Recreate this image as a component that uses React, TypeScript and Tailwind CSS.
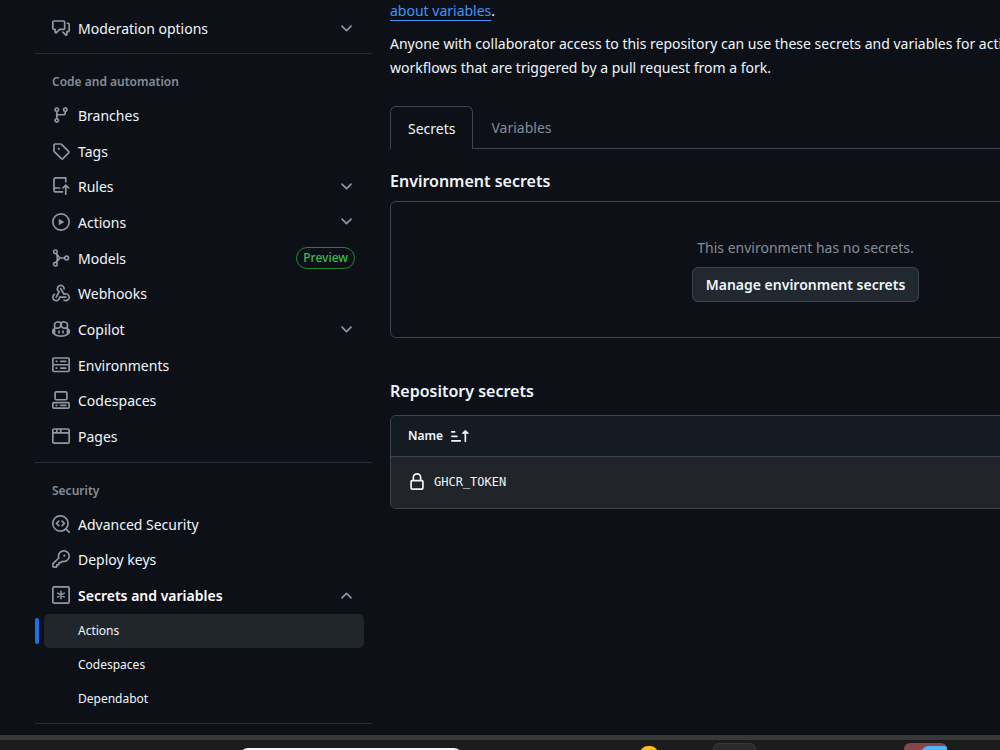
import type { ReactNode } from "react";

const ICONS = {
  discussion: [
    "M1.75 1h8.5c.966 0 1.75.784 1.75 1.75v5.5A1.75 1.75 0 0 1 10.25 10H7.061l-2.574 2.573A1.458 1.458 0 0 1 2 11.543V10h-.25A1.75 1.75 0 0 1 0 8.25v-5.5C0 1.784.784 1 1.75 1ZM1.5 2.75v5.5c0 .138.112.25.25.25h1a.75.75 0 0 1 .75.75v2.19l2.72-2.72a.749.749 0 0 1 .53-.22h3.5a.25.25 0 0 0 .25-.25v-5.5a.25.25 0 0 0-.25-.25h-8.5a.25.25 0 0 0-.25.25Zm13 2a.25.25 0 0 0-.25-.25h-.5a.75.75 0 0 1 0-1.5h.5c.966 0 1.75.784 1.75 1.75v5.5A1.75 1.75 0 0 1 14.25 12H14v1.543a1.458 1.458 0 0 1-2.487 1.03L9.22 12.28a.749.749 0 0 1 .326-1.275.749.749 0 0 1 .734.215l2.22 2.22v-2.19a.75.75 0 0 1 .75-.75h1a.25.25 0 0 0 .25-.25Z",
  ],
  branch: [
    "M9.5 3.25a2.25 2.25 0 1 1 3 2.122V6A2.5 2.5 0 0 1 10 8.5H6a1 1 0 0 0-1 1v1.128a2.251 2.251 0 1 1-1.5 0V5.372a2.25 2.25 0 1 1 1.5 0v1.836A2.493 2.493 0 0 1 6 7h4a1 1 0 0 0 1-1v-.628A2.25 2.25 0 0 1 9.5 3.25Zm-6 0a.75.75 0 1 0 1.5 0 .75.75 0 0 0-1.5 0Zm8.25-.75a.75.75 0 1 0 0 1.5.75.75 0 0 0 0-1.5ZM4.25 12a.75.75 0 1 0 0 1.5.75.75 0 0 0 0-1.5Z",
  ],
  tag: [
    "M1 7.775V2.75C1 1.784 1.784 1 2.75 1h5.025c.464 0 .91.184 1.238.513l6.25 6.25a1.75 1.75 0 0 1 0 2.474l-5.026 5.026a1.75 1.75 0 0 1-2.474 0l-6.25-6.25A1.752 1.752 0 0 1 1 7.775Zm1.5 0c0 .066.026.13.073.177l6.25 6.25a.25.25 0 0 0 .354 0l5.025-5.025a.25.25 0 0 0 0-.354l-6.25-6.25a.25.25 0 0 0-.177-.073H2.75a.25.25 0 0 0-.25.25ZM6 5a1 1 0 1 1 0 2 1 1 0 0 1 0-2Z",
  ],
  push: [
    "M1 2.5A2.5 2.5 0 0 1 3.5 0h8.75a.75.75 0 0 1 .75.75v3.5a.75.75 0 0 1-1.5 0V1.5h-8a1 1 0 0 0-1 1v6.708A2.493 2.493 0 0 1 3.5 9h3.25a.75.75 0 0 1 0 1.5H3.5a1 1 0 0 0 0 2h5.75a.75.75 0 0 1 0 1.5H3.5A2.5 2.5 0 0 1 1 11.5v-9Zm13.23 7.79h-.001l-1.224-1.224v6.184a.75.75 0 0 1-1.5 0V9.066L10.28 10.29a.75.75 0 0 1-1.06-1.061l2.505-2.504a.75.75 0 0 1 1.06 0L15.29 9.23a.751.751 0 0 1-.018 1.042.751.751 0 0 1-1.042.018Z",
  ],
  play: [
    "M8 0a8 8 0 1 1 0 16A8 8 0 0 1 8 0ZM1.5 8a6.5 6.5 0 1 0 13 0 6.5 6.5 0 0 0-13 0Zm4.879-2.773 4.264 2.559a.25.25 0 0 1 0 .428l-4.264 2.559A.25.25 0 0 1 6 10.559V5.442a.25.25 0 0 1 .379-.215Z",
  ],
  webhook: [
    "M5.5 4.25a2.25 2.25 0 0 1 4.5 0 .75.75 0 0 0 1.5 0 3.75 3.75 0 1 0-6.14 2.889l-2.272 4.258a.75.75 0 0 0 1.324.706L7 7.25a.75.75 0 0 0-.309-1.015A2.25 2.25 0 0 1 5.5 4.25Z",
    "M7.364 3.607a.75.75 0 0 1 1.03.257l2.608 4.349a3.75 3.75 0 1 1-.628 6.785.75.75 0 0 1 .752-1.299 2.25 2.25 0 1 0-.033-3.88.75.75 0 0 1-1.03-.256L7.107 4.636a.75.75 0 0 1 .257-1.03Z",
    "M2.9 8.776A.75.75 0 0 1 2.625 9.8 2.25 2.25 0 1 0 6 11.75a.75.75 0 0 1 .75-.751h5.5a.75.75 0 0 1 0 1.5H7.425a3.751 3.751 0 1 1-5.55-3.998.75.75 0 0 1 1.024.274Z",
  ],
  copilot: [
    "M7.998 15.035c-4.562 0-7.873-2.914-7.998-3.749V9.338c.085-.628.677-1.686 1.588-2.065.013-.07.024-.143.036-.218.029-.183.06-.384.126-.612-.201-.508-.254-1.084-.254-1.656 0-.87.128-1.769.693-2.484.579-.733 1.494-1.124 2.724-1.261 1.206-.134 2.262.034 2.944.765.05.053.096.108.139.165.044-.057.094-.112.143-.165.682-.731 1.738-.899 2.944-.765 1.23.137 2.145.528 2.724 1.261.566.715.693 1.614.693 2.484 0 .572-.053 1.148-.254 1.656.066.228.098.429.126.612.012.076.024.148.037.218.924.385 1.522 1.471 1.591 2.095v1.872c0 .766-3.351 3.795-8.002 3.795Zm0-1.485c2.28 0 4.584-1.11 5.002-1.433V7.862l-.023-.116c-.49.21-1.075.291-1.727.291-1.146 0-2.059-.327-2.71-.991A3.222 3.222 0 0 1 8 6.303a3.24 3.24 0 0 1-.544.743c-.65.664-1.563.991-2.71.991-.652 0-1.236-.081-1.727-.291l-.023.116v4.255c.419.323 2.722 1.433 5.002 1.433ZM6.762 2.83c-.193-.206-.637-.413-1.682-.297-1.019.113-1.479.404-1.713.7-.247.312-.369.789-.369 1.554 0 .793.129 1.171.308 1.371.162.181.519.379 1.442.379.853 0 1.339-.235 1.638-.54.315-.322.527-.827.617-1.553.117-.935-.037-1.395-.241-1.614Zm4.155-.297c-1.044-.116-1.488.091-1.681.297-.204.219-.359.679-.242 1.614.091.726.303 1.231.618 1.553.299.305.784.54 1.638.54.922 0 1.28-.198 1.442-.379.179-.2.308-.578.308-1.371 0-.765-.123-1.242-.37-1.554-.233-.296-.693-.587-1.713-.7Z",
    "M6.25 9.037a.75.75 0 0 1 .75.75v1.501a.75.75 0 0 1-1.5 0V9.787a.75.75 0 0 1 .75-.75Zm4.25.75v1.501a.75.75 0 0 1-1.5 0V9.787a.75.75 0 0 1 1.5 0Z",
  ],
  server: [
    "M1.75 1h12.5c.966 0 1.75.784 1.75 1.75v4c0 .372-.116.717-.314 1 .198.283.314.628.314 1v4a1.75 1.75 0 0 1-1.75 1.75H1.75A1.75 1.75 0 0 1 0 12.75v-4c0-.358.109-.707.314-1a1.739 1.739 0 0 1-.314-1v-4C0 1.784.784 1 1.75 1ZM1.5 2.75v4c0 .138.112.25.25.25h12.5a.25.25 0 0 0 .25-.25v-4a.25.25 0 0 0-.25-.25H1.75a.25.25 0 0 0-.25.25Zm.25 5.75a.25.25 0 0 0-.25.25v4c0 .138.112.25.25.25h12.5a.25.25 0 0 0 .25-.25v-4a.25.25 0 0 0-.25-.25ZM7 4.75A.75.75 0 0 1 7.75 4h4.5a.75.75 0 0 1 0 1.5h-4.5A.75.75 0 0 1 7 4.75ZM7.75 10h4.5a.75.75 0 0 1 0 1.5h-4.5a.75.75 0 0 1 0-1.5ZM3 4.75A.75.75 0 0 1 3.75 4h.5a.75.75 0 0 1 0 1.5h-.5A.75.75 0 0 1 3 4.75ZM3.75 10h.5a.75.75 0 0 1 0 1.5h-.5a.75.75 0 0 1 0-1.5Z",
  ],
  codespaces: [
    "M0 11.25c0-.966.784-1.75 1.75-1.75h12.5c.966 0 1.75.784 1.75 1.75v3A1.75 1.75 0 0 1 14.25 16H1.75A1.75 1.75 0 0 1 0 14.25Zm2-9.5C2 .784 2.784 0 3.75 0h8.5C13.216 0 14 .784 14 1.75v5a1.75 1.75 0 0 1-1.75 1.75h-8.5A1.75 1.75 0 0 1 2 6.75Zm1.75-.25a.25.25 0 0 0-.25.25v5c0 .138.112.25.25.25h8.5a.25.25 0 0 0 .25-.25v-5a.25.25 0 0 0-.25-.25Zm-2 9.5a.25.25 0 0 0-.25.25v3c0 .138.112.25.25.25h12.5a.25.25 0 0 0 .25-.25v-3a.25.25 0 0 0-.25-.25Z",
    "M7 12.75a.75.75 0 0 1 .75-.75h4.5a.75.75 0 0 1 0 1.5h-4.5a.75.75 0 0 1-.75-.75Zm-4 0a.75.75 0 0 1 .75-.75h.5a.75.75 0 0 1 0 1.5h-.5a.75.75 0 0 1-.75-.75Z",
  ],
  browser: [
    "M0 2.75C0 1.784.784 1 1.75 1h12.5c.966 0 1.75.784 1.75 1.75v10.5A1.75 1.75 0 0 1 14.25 15H1.75A1.75 1.75 0 0 1 0 13.25ZM14.5 6h-13v7.25c0 .138.112.25.25.25h12.5a.25.25 0 0 0 .25-.25Zm-6-3.5v2h6V2.75a.25.25 0 0 0-.25-.25ZM5 2.5v2h2v-2Zm-3.25 0a.25.25 0 0 0-.25.25V4.5h2v-2Z",
  ],
  codescan: [
    "M8.47 4.97a.75.75 0 0 0 0 1.06L9.94 7.5 8.47 8.97a.75.75 0 1 0 1.06 1.06l2-2a.75.75 0 0 0 0-1.06l-2-2a.75.75 0 0 0-1.06 0ZM6.53 6.03a.75.75 0 0 0-1.06-1.06l-2 2a.75.75 0 0 0 0 1.06l2 2a.75.75 0 1 0 1.06-1.06L5.06 7.5l1.47-1.47Z",
    "M12.246 13.307a7.501 7.501 0 1 1 1.06-1.06l2.474 2.473a.749.749 0 0 1-.326 1.275.749.749 0 0 1-.734-.215ZM1.5 7.5a6.002 6.002 0 0 0 3.608 5.504 6.002 6.002 0 0 0 6.486-1.117.748.748 0 0 1 .292-.293A6 6 0 1 0 1.5 7.5Z",
  ],
  key: [
    "M10.5 0a5.499 5.499 0 1 1-1.288 10.848l-.932.932a.749.749 0 0 1-.53.22H7v.75a.749.749 0 0 1-.22.53l-.5.5a.749.749 0 0 1-.53.22H5v.75a.749.749 0 0 1-.22.53l-.5.5a.749.749 0 0 1-.53.22h-2A1.75 1.75 0 0 1 0 14.25v-2c0-.199.079-.389.22-.53l4.932-4.932A5.5 5.5 0 0 1 10.5 0Zm-4 5.5c-.001.431.069.86.205 1.269a.75.75 0 0 1-.181.768L1.5 12.56v1.69c0 .138.112.25.25.25h1.69l.06-.06v-1.19a.75.75 0 0 1 .75-.75h1.19l.06-.06v-1.19a.75.75 0 0 1 .75-.75h1.19l1.023-1.025a.75.75 0 0 1 .768-.18A4 4 0 1 0 6.5 5.5ZM11 6a1 1 0 1 1 0-2 1 1 0 0 1 0 2Z",
  ],
  sort: [
    "m12.927 2.573 3 3A.25.25 0 0 1 15.75 6H13.5v6.75a.75.75 0 0 1-1.5 0V6H9.75a.25.25 0 0 1-.177-.427l3-3a.25.25 0 0 1 .354 0ZM0 12.25a.75.75 0 0 1 .75-.75h7.5a.75.75 0 0 1 0 1.5H.75a.75.75 0 0 1-.75-.75Zm0-4a.75.75 0 0 1 .75-.75h4.5a.75.75 0 0 1 0 1.5H.75A.75.75 0 0 1 0 8.25Zm0-4a.75.75 0 0 1 .75-.75h2.5a.75.75 0 0 1 0 1.5H.75A.75.75 0 0 1 0 4.25Z",
  ],
  lock: [
    "M4 4a4 4 0 0 1 8 0v2h.25c.966 0 1.75.784 1.75 1.75v5.5A1.75 1.75 0 0 1 12.25 15h-8.5A1.75 1.75 0 0 1 2 13.25v-5.5C2 6.784 2.784 6 3.75 6H4Zm8.25 3.5h-8.5a.25.25 0 0 0-.25.25v5.5c0 .138.112.25.25.25h8.5a.25.25 0 0 0 .25-.25v-5.5a.25.25 0 0 0-.25-.25ZM10.5 6V4a2.5 2.5 0 1 0-5 0v2Z",
  ],
  chevron: [
    "M12.78 5.22a.749.749 0 0 1 0 1.06l-4.25 4.25a.749.749 0 0 1-1.06 0L3.22 6.28a.749.749 0 1 1 1.06-1.06L8 8.939l3.72-3.719a.749.749 0 0 1 1.06 0Z",
  ],
};

type IconName = keyof typeof ICONS;

function Icon({ name, className = "size-[18px]" }: { name: IconName; className?: string }) {
  return (
    <svg viewBox="0 0 16 16" fill="currentColor" aria-hidden="true" className={`shrink-0 ${className}`}>
      {ICONS[name].map((d) => (
        <path key={d} d={d} />
      ))}
    </svg>
  );
}

function ModelIcon() {
  return (
    <svg viewBox="0 0 16 16" fill="none" stroke="currentColor" strokeWidth="1.4" aria-hidden="true" className="size-[18px] shrink-0">
      <circle cx="3" cy="2.5" r="1.6" />
      <circle cx="3" cy="13.5" r="1.6" />
      <circle cx="13" cy="8" r="1.7" />
      <path strokeLinejoin="round" d="M3.8 4 7 8h4.3M7 8l-3.2 4M3.8 4c1.2 2.6 1.2 5.4 0 8" />
    </svg>
  );
}

function AsteriskKeyIcon() {
  return (
    <svg viewBox="0 0 16 16" fill="none" stroke="currentColor" strokeWidth="1.5" aria-hidden="true" className="size-[18px] shrink-0">
      <rect x="0.75" y="0.75" width="14.5" height="14.5" rx="1.2" />
      <path strokeWidth="1.4" strokeLinecap="round" d="M8 4.6v6.8M5.1 6.3l5.8 3.4M10.9 6.3 5.1 9.7" />
    </svg>
  );
}

type Item = { label: string; icon: ReactNode; menu?: "down" | "up"; badge?: string };

const CODE_ITEMS: Item[] = [
  { label: "Branches", icon: <Icon name="branch" /> },
  { label: "Tags", icon: <Icon name="tag" /> },
  { label: "Rules", icon: <Icon name="push" />, menu: "down" },
  { label: "Actions", icon: <Icon name="play" />, menu: "down" },
  { label: "Models", icon: <ModelIcon />, badge: "Preview" },
  { label: "Webhooks", icon: <Icon name="webhook" /> },
  { label: "Copilot", icon: <Icon name="copilot" />, menu: "down" },
  { label: "Environments", icon: <Icon name="server" /> },
  { label: "Codespaces", icon: <Icon name="codespaces" /> },
  { label: "Pages", icon: <Icon name="browser" /> },
];

const SECURITY_ITEMS: Item[] = [
  { label: "Advanced Security", icon: <Icon name="codescan" /> },
  { label: "Deploy keys", icon: <Icon name="key" /> },
  { label: "Secrets and variables", icon: <AsteriskKeyIcon />, menu: "up" },
];

function NavItem({ label, icon, menu, badge }: Item) {
  const body = (
    <>
      <span className="text-[#9198a1]">{icon}</span>
      <span className={menu === "up" ? "flex-1 pt-0.5 font-semibold text-white" : "flex-1 pt-0.5"}>{label}</span>
      {badge && (
        <span className="rounded-full border border-[#238636] px-[6px] text-[12px] leading-5 font-medium text-[#3fb950]">
          {badge}
        </span>
      )}
      {menu && (
        <span className="text-[#9198a1]">
          <Icon name="chevron" className={menu === "up" ? "size-[17px] rotate-180" : "size-[17px]"} />
        </span>
      )}
    </>
  );
  const style = "flex h-full w-full items-center gap-2 px-[17px] text-left text-[14px] leading-5";
  return (
    <li>
      {menu ? (
        <button type="button" aria-expanded={menu === "up"} className={style}>
          {body}
        </button>
      ) : (
        <a href="#" className={style}>
          {body}
        </a>
      )}
    </li>
  );
}

function SubItem({ label, current }: { label: string; current?: boolean }) {
  return (
    <li className="flex h-[34px] items-center">
      <span className={current ? "h-[26px] w-1 rounded-full bg-[#1f6feb]" : "w-1"} />
      <a
        href="#"
        aria-current={current ? "page" : undefined}
        className={`mr-2 ml-[5px] flex h-full flex-1 items-center rounded-md pl-[34px] text-[12px] ${current ? "bg-[#21262c]" : ""}`}
      >
        {label}
      </a>
    </li>
  );
}

function Sidebar() {
  return (
    <nav aria-label="Settings" className="w-[337px] shrink-0 pt-[10px]">
      <ul className="grid h-9">
        <NavItem label="Moderation options" icon={<Icon name="discussion" />} menu="down" />
      </ul>
      <hr className="mt-[7px] border-[#262c34]" />
      <h2 className="mt-[18px] px-[17px] text-[12px] leading-5 font-semibold text-[#848d97]">Code and automation</h2>
      <ul className="mt-[5px] grid min-h-[357px] auto-rows-fr">
        {CODE_ITEMS.map((item) => (
          <NavItem key={item.label} {...item} />
        ))}
      </ul>
      <hr className="mt-2 border-[#262c34]" />
      <h2 className="mt-[18px] px-[17px] text-[12px] leading-5 font-semibold text-[#848d97]">Security</h2>
      <ul className="mt-[5px] grid min-h-[107px] auto-rows-fr">
        {SECURITY_ITEMS.map((item) => (
          <NavItem key={item.label} {...item} />
        ))}
      </ul>
      <ul className="mt-px">
        <SubItem label="Actions" current />
        <SubItem label="Codespaces" />
        <SubItem label="Dependabot" />
      </ul>
      <hr className="mt-[7px] border-[#262c34]" />
    </nav>
  );
}

function Content() {
  return (
    <main className="min-w-0 flex-1 overflow-hidden">
      <div className="w-[831px]">
        <p className="text-[14px] leading-[22px]">
          <a href="#" className="text-[#4493f8] underline underline-offset-4">
            about variables
          </a>
          .
        </p>
        <p className="mt-[10px] text-[14px] leading-6">
          Anyone with collaborator access to this repository can use these secrets and variables for actions. They are not passed to
          workflows that are triggered by a pull request from a fork.
        </p>

        <div role="tablist" className="mt-[26px] flex border-b border-[#3d444d] text-[14px]">
          <button
            type="button"
            role="tab"
            aria-selected="true"
            className="-mb-px h-[43px] rounded-t-md border border-b-0 border-[#3d444d] bg-[#0d1117] px-[17px]"
          >
            Secrets
          </button>
          <button type="button" role="tab" aria-selected="false" className="px-[18px] text-[#848d97]">
            Variables
          </button>
        </div>

        <h2 className="mt-5 text-[16px] leading-6 font-semibold">Environment secrets</h2>
        <section className="mt-2 flex flex-col items-center rounded-md border border-[#3d444d] py-[35px]">
          <p className="text-[14px] leading-[22px] text-[#848d97]">This environment has no secrets.</p>
          <button
            type="button"
            className="mt-2 h-[35px] rounded-md border border-[#3d444d] bg-[#212830] px-[13px] text-[14px] font-semibold"
          >
            Manage environment secrets
          </button>
        </section>

        <h2 className="mt-[41px] text-[16px] leading-6 font-semibold">Repository secrets</h2>
        <div className="mt-3 overflow-hidden rounded-md border border-[#3d444d]">
          <table className="w-full text-left">
            <thead className="bg-[#151b23]">
              <tr className="h-10 border-b border-[#3d444d]">
                <th scope="col" className="px-[17px]">
                  <button type="button" className="flex items-center gap-2 text-[12px] font-semibold">
                    Name <Icon name="sort" />
                  </button>
                </th>
              </tr>
            </thead>
            <tbody>
              <tr className="h-[52px] bg-[#212529]">
                <td className="px-[17px]">
                  <span className="flex items-center gap-2 font-['DejaVu_Sans_Mono',monospace] text-[12px]">
                    <Icon name="lock" />
                    GHCR_TOKEN
                  </span>
                </td>
              </tr>
            </tbody>
          </table>
        </div>
      </div>
    </main>
  );
}

function Taskbar() {
  return (
    <footer className="relative h-[15px] shrink-0 overflow-hidden border-t-[5px] border-[#383838] bg-[#1c1c1c]">
      <div className="absolute top-[8px] left-[24%] h-8 w-[222px] rounded-lg bg-[#f5f5f5]" />
      <div className="absolute top-[6px] left-[64%] h-4 w-[18px] rounded-full bg-[#fbbf16]" />
      <div className="absolute top-[3px] left-[71.3%] h-8 w-[43px] rounded-md border border-[#383838] bg-[#2b2b2b]" />
      <div className="absolute top-[3px] left-[90.4%] h-8 w-[43px] overflow-hidden rounded-md bg-[#86454c]">
        <div className="absolute top-[3px] left-[17px] h-8 w-8 rounded-lg bg-[#4db8f5]" />
      </div>
    </footer>
  );
}

export default function App() {
  return (
    <div className="flex h-screen flex-col overflow-hidden bg-[#0d1117] font-['Noto_Sans',sans-serif] text-[#f0f6fc]">
      <div className="flex min-h-0 flex-1 gap-[18px] overflow-hidden pl-[35px]">
        <Sidebar />
        <Content />
      </div>
      <Taskbar />
    </div>
  );
}
